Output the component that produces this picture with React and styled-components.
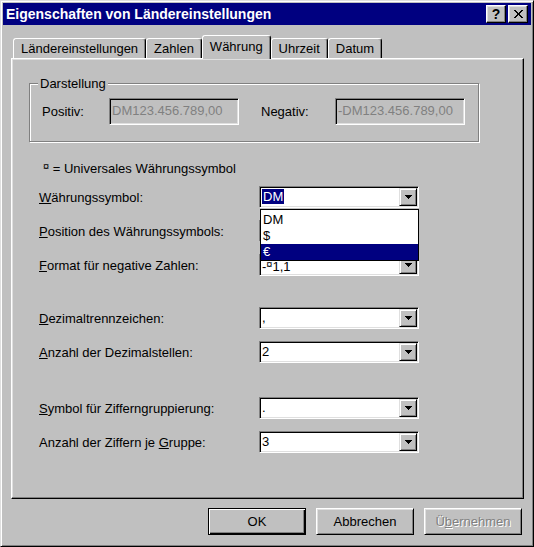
import React from 'react'
import styled, { createGlobalStyle } from 'styled-components'

const GlobalStyle = createGlobalStyle`
  html, body {
    margin: 0;
    padding: 0;
    background: #c0c0c0;
  }
  body {
    font-family: "Liberation Sans", Arial, sans-serif;
    font-size: 13px;
    color: #000;
  }
`

const Window = styled.div`
  box-sizing: border-box;
  width: 534px;
  height: 547px;
  padding: 2px;
  background: #c0c0c0;
  border: 1px solid;
  border-color: #dfdfdf #000 #000 #dfdfdf;
  box-shadow: inset 1px 1px #fff, inset -1px -1px #808080;
  display: flex;
  flex-direction: column;
`
const TitleBar = styled.div`
  height: 22px;
  padding: 0 3px 0 3px;
  background: #000080;
  display: flex;
  align-items: center;
  gap: 2px;
`
const Title = styled.div`
  flex: 1;
  color: #fff;
  font-weight: bold;
  font-size: 14px;
`
const TitleButton = styled.div`
  box-sizing: border-box;
  width: 20px;
  height: 18px;
  background: #c0c0c0;
  border: 1px solid;
  border-color: #fff #000 #000 #fff;
  box-shadow: inset -1px -1px #808080, inset 1px 1px #dfdfdf;
  display: flex;
  align-items: center;
  justify-content: center;
  font-weight: bold;
  font-size: 14px;
  line-height: 1;
`
const Body = styled.div`
  flex: 1;
  padding: 10px 7px 0 8px;
  display: flex;
  flex-direction: column;
`
const TabStrip = styled.div`
  height: 23px;
  padding-left: 2px;
  display: flex;
  align-items: flex-end;
`
const Tab = styled.div`
  position: relative;
  z-index: ${p => (p.$active ? 1 : 0)};
  box-sizing: border-box;
  height: ${p => (p.$active ? 24 : 20)}px;
  margin-bottom: ${p => (p.$active ? -1 : 0)}px;
  padding: 0 7px ${p => (p.$active ? 3 : 0)}px;
  background: #c0c0c0;
  border: 1px solid;
  border-bottom: none;
  border-color: #fff #000 transparent #fff;
  border-radius: 3px 3px 0 0;
  box-shadow: inset -1px 0 #808080;
  display: flex;
  align-items: center;
  white-space: nowrap;
`
const Panel = styled.div`
  box-sizing: border-box;
  height: 441px;
  padding: 24px 0 0 17px;
  border: 1px solid;
  border-color: #fff #000 #000 #fff;
  box-shadow: inset -1px -1px #808080, inset 1px 1px #dfdfdf;
  display: flex;
  flex-direction: column;
`
const GroupBox = styled.div`
  box-sizing: border-box;
  width: 450px;
  height: 59px;
  border: 1px solid #808080;
  box-shadow: inset 1px 1px #fff, 1px 1px #fff;
  display: flex;
  flex-direction: column;
`
const GroupLabel = styled.div`
  align-self: flex-start;
  margin: -8px 0 0 8px;
  padding: 0 2px;
  line-height: 15px;
  background: #c0c0c0;
`
const GroupRow = styled.div`
  margin-top: 7px;
  padding-left: 12px;
  display: flex;
  align-items: center;
`
const FieldLabel = styled.div`
  width: ${p => p.$width}px;
`
const ReadOnlyField = styled.div`
  box-sizing: border-box;
  width: ${p => p.$width}px;
  height: 27px;
  padding: 3px 0 0 2px;
  border: 1px solid;
  border-color: #808080 #fff #fff #808080;
  box-shadow: inset 1px 1px #000, inset -1px -1px #dfdfdf;
  color: #808080;
  line-height: 17px;
  white-space: nowrap;
  overflow: hidden;
`
const Spacer = styled.div`
  width: ${p => p.$width}px;
`
const Note = styled.div`
  margin-top: 17px;
  padding-left: 14px;
  line-height: 15px;
`
const Curr = styled.span`
  font-size: 11px;
  vertical-align: 3px;
`
const Form = styled.div`
  margin-top: 4px;
  padding-left: 10px;
  display: flex;
  flex-direction: column;
`
const Section = styled.div`
  margin-top: ${p => p.$gap || 0}px;
  display: flex;
  flex-direction: column;
`
const Row = styled.div`
  height: 34px;
  display: flex;
  align-items: center;
`
const RowLabel = styled.div`
  width: 220px;
`
const Combo = styled.div`
  position: relative;
  z-index: ${p => (p.$open ? 2 : 0)};
  box-sizing: border-box;
  width: 160px;
  height: 22px;
  padding: 1px;
  background: #fff;
  border: 1px solid;
  border-color: #808080 #fff #fff #808080;
  box-shadow: inset 1px 1px #000, inset -1px -1px #dfdfdf;
  display: flex;
  align-items: center;
`
const ComboValue = styled.div`
  flex: 1;
  padding-left: 1px;
  line-height: 14px;
  white-space: nowrap;
`
const Selected = styled.span`
  padding: 0 1px;
  background: #000080;
  color: #fff;
`
const DropButton = styled.div`
  box-sizing: border-box;
  width: 18px;
  height: 18px;
  background: #c0c0c0;
  border: 1px solid;
  border-color: #dfdfdf #000 #000 #dfdfdf;
  box-shadow: inset 1px 1px #fff, inset -1px -1px #808080;
  display: flex;
  align-items: center;
  justify-content: center;
`
const DropList = styled.div`
  position: absolute;
  top: calc(100% + 2px);
  left: 0;
  right: -1px;
  padding: 2px 0 0;
  background: #fff;
  border: 1px solid #000;
`
const ListItem = styled.div`
  height: 16px;
  padding-left: 2px;
  line-height: 16px;
  background: ${p => (p.$active ? '#000080' : 'transparent')};
  color: ${p => (p.$active ? '#fff' : '#000')};
`
const Footer = styled.div`
  margin-top: 9px;
  padding-right: 2px;
  display: flex;
  justify-content: flex-end;
  gap: 10px;
`
const Button = styled.div`
  box-sizing: border-box;
  width: 98px;
  height: 27px;
  background: #c0c0c0;
  border: 1px solid;
  border-color: ${p => (p.$default ? '#000' : '#fff #000 #000 #fff')};
  box-shadow: ${p =>
    p.$default
      ? 'inset 1px 1px #fff, inset -1px -1px #000, inset -2px -2px #808080'
      : 'inset 1px 1px #dfdfdf, inset -1px -1px #808080'};
  display: flex;
  align-items: center;
  justify-content: center;
  color: ${p => (p.$disabled ? '#808080' : '#000')};
  text-shadow: ${p => (p.$disabled ? '1px 1px 0 #fff' : 'none')};
`

const Arrow = () => (
  <svg width="7" height="4" viewBox="0 0 7 4" shapeRendering="crispEdges">
    <path d="M0 0h7v1h-1v1h-1v1h-1v1h-1v-1h-1v-1h-1v-1h-1z" fill="#000" />
  </svg>
)

const CloseGlyph = () => (
  <svg width="9" height="8" viewBox="0 0 9 8" shapeRendering="crispEdges">
    <path
      d="M0 0h2v1h-2zM7 0h2v1h-2zM1 1h2v1h-2zM6 1h2v1h-2zM2 2h2v1h-2zM5 2h2v1h-2zM3 3h3v2h-3zM2 5h2v1h-2zM5 5h2v1h-2zM1 6h2v1h-2zM6 6h2v1h-2zM0 7h2v1h-2zM7 7h2v1h-2z"
      fill="#000"
    />
  </svg>
)

const ComboBox = ({ children, open, items, activeItem }) => (
  <Combo $open={open}>
    <ComboValue>{children}</ComboValue>
    <DropButton>
      <Arrow />
    </DropButton>
    {open && (
      <DropList>
        {items.map(item => (
          <ListItem key={item} $active={item === activeItem}>{item}</ListItem>
        ))}
      </DropList>
    )}
  </Combo>
)

const tabs = ['Ländereinstellungen', 'Zahlen', 'Währung', 'Uhrzeit', 'Datum']

export default function App() {
  return (
    <>
      <GlobalStyle />
      <Window>
        <TitleBar>
          <Title>Eigenschaften von Ländereinstellungen</Title>
          <TitleButton>?</TitleButton>
          <TitleButton><CloseGlyph /></TitleButton>
        </TitleBar>
        <Body>
          <TabStrip>
            {tabs.map(t => (
              <Tab key={t} $active={t === 'Währung'}>{t}</Tab>
            ))}
          </TabStrip>
          <Panel>
            <GroupBox>
              <GroupLabel>Darstellung</GroupLabel>
              <GroupRow>
                <FieldLabel $width={67}>Positiv:</FieldLabel>
                <ReadOnlyField $width={130}>DM123.456.789,00</ReadOnlyField>
                <Spacer $width={22} />
                <FieldLabel $width={74}>Negativ:</FieldLabel>
                <ReadOnlyField $width={130}>-DM123.456.789,00</ReadOnlyField>
              </GroupRow>
            </GroupBox>
            <Note><Curr>¤</Curr> = Universales Währungssymbol</Note>
            <Form>
              <Section>
                <Row>
                  <RowLabel><u>W</u>ährungssymbol:</RowLabel>
                  <ComboBox open items={['DM', '$', '€']} activeItem="€">
                    <Selected>DM</Selected>
                  </ComboBox>
                </Row>
                <Row>
                  <RowLabel><u>P</u>osition des Währungssymbols:</RowLabel>
                  <ComboBox />
                </Row>
                <Row>
                  <RowLabel><u>F</u>ormat für negative Zahlen:</RowLabel>
                  <ComboBox>-<Curr>¤</Curr>1,1</ComboBox>
                </Row>
              </Section>
              <Section $gap={19}>
                <Row>
                  <RowLabel><u>D</u>ezimaltrennzeichen:</RowLabel>
                  <ComboBox>,</ComboBox>
                </Row>
                <Row>
                  <RowLabel><u>A</u>nzahl der Dezimalstellen:</RowLabel>
                  <ComboBox>2</ComboBox>
                </Row>
              </Section>
              <Section $gap={22}>
                <Row>
                  <RowLabel><u>S</u>ymbol für Zifferngruppierung:</RowLabel>
                  <ComboBox>.</ComboBox>
                </Row>
                <Row>
                  <RowLabel>Anzahl der Ziffern je <u>G</u>ruppe:</RowLabel>
                  <ComboBox>3</ComboBox>
                </Row>
              </Section>
            </Form>
          </Panel>
          <Footer>
            <Button $default>OK</Button>
            <Button>Abbrechen</Button>
            <Button $disabled>Ü<u>b</u>ernehmen</Button>
          </Footer>
        </Body>
      </Window>
    </>
  )
}
